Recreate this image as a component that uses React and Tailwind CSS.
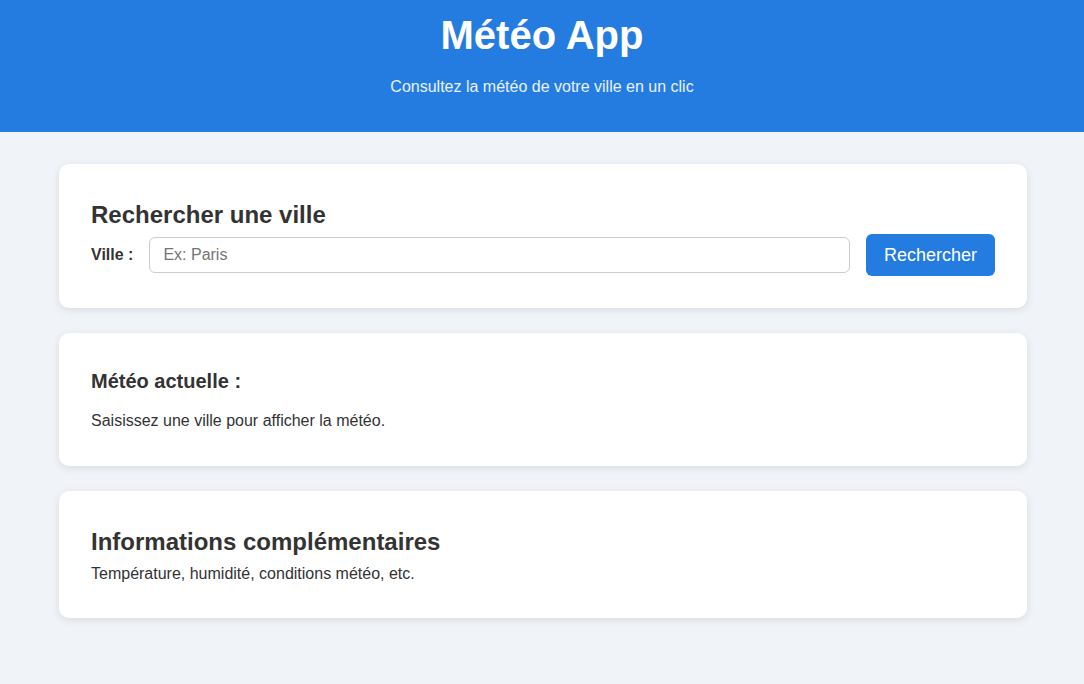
import React, { useState } from "react";

const App = () => {
  const [city, setCity] = useState("");

  return (
    <div className="min-h-[684px] bg-[#f0f4f8] font-['Liberation_Sans',Arial,sans-serif] text-[#333]">
      <header className="h-[132px] bg-[#247ce0] pt-[12px] text-center text-white">
        <h1 className="text-[40px] font-bold leading-[46px]">Météo App</h1>
        <p className="mt-[19px] text-[16px] leading-[20px] text-white/90">
          Consultez la météo de votre ville en un clic
        </p>
      </header>

      <main className="ml-[59px] w-[968px] pt-[32px]">
        {/* recherche */}
        <section className="rounded-[10px] bg-white px-[32px] pt-[32px] pb-[32px] shadow-[0_2px_8px_rgba(0,0,0,0.1)]">
          <h2 className="text-[24px] font-bold leading-[38px]">
            Rechercher une ville
          </h2>
          <div className="flex items-center">
            <label className="text-[16px] font-bold">Ville :</label>
            <input
              type="text"
              value={city}
              onChange={(e) => setCity(e.target.value)}
              placeholder="Ex: Paris"
              className="ml-[16px] h-[36px] flex-1 rounded-[6px] border border-[#ccc] px-[13px] text-[16px] placeholder:text-[#757575] outline-none"
            />
            <button className="ml-[16px] h-[42px] w-[129px] rounded-[6px] bg-[#247ce0] text-[18px] text-white">
              Rechercher
            </button>
          </div>
        </section>

        {/* météo actuelle */}
        <section className="mt-[25px] rounded-[10px] bg-white px-[32px] pt-[32px] pb-[33px] shadow-[0_2px_8px_rgba(0,0,0,0.1)]">
          <h3 className="text-[20px] font-bold leading-[32px]">
            Météo actuelle :
          </h3>
          <p className="mt-[12px] text-[16px] leading-[24px]">
            Saisissez une ville pour afficher la météo.
          </p>
        </section>

        {/* infos */}
        <section className="mt-[25px] rounded-[10px] bg-white px-[32px] pt-[32px] pb-[31px] shadow-[0_2px_8px_rgba(0,0,0,0.1)]">
          <h2 className="text-[24px] font-bold leading-[38px]">
            Informations complémentaires
          </h2>
          <p className="text-[16px] leading-[26px]">
            Température, humidité, conditions météo, etc.
          </p>
        </section>
      </main>
    </div>
  );
};

export default App;
